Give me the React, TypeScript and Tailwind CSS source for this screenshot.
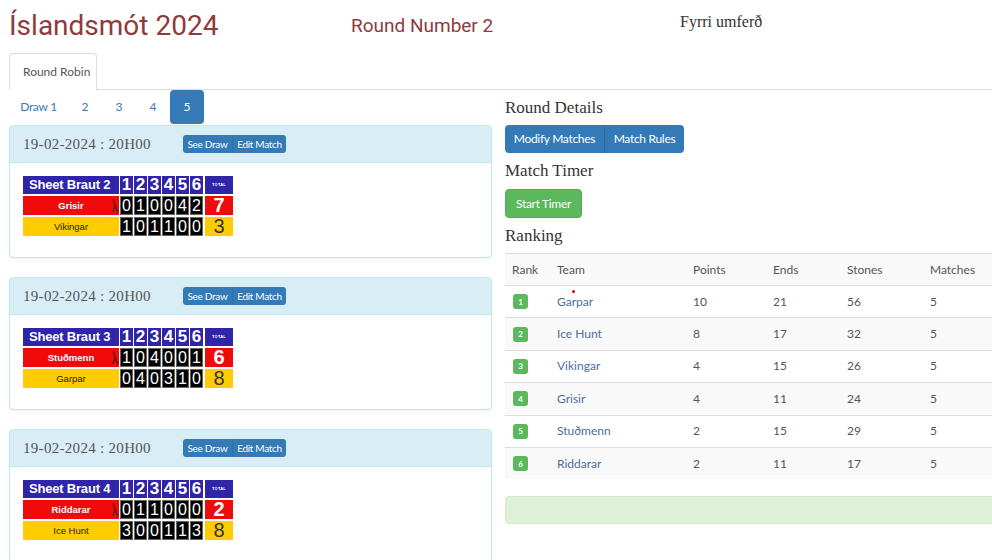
import React from "react";

type Match = {
  sheet: string;
  red: string;
  yellow: string;
  redScores: number[];
  yellowScores: number[];
  redTotal: number;
  yellowTotal: number;
};

const matches: Match[] = [
  { sheet: "Sheet Braut 2", red: "Grisir", yellow: "Vikingar", redScores: [0, 1, 0, 0, 4, 2], yellowScores: [1, 0, 1, 1, 0, 0], redTotal: 7, yellowTotal: 3 },
  { sheet: "Sheet Braut 3", red: "Stuðmenn", yellow: "Garpar", redScores: [1, 0, 4, 0, 0, 1], yellowScores: [0, 4, 0, 3, 1, 0], redTotal: 6, yellowTotal: 8 },
  { sheet: "Sheet Braut 4", red: "Riddarar", yellow: "Ice Hunt", redScores: [0, 1, 1, 0, 0, 0], yellowScores: [3, 0, 0, 1, 1, 3], redTotal: 2, yellowTotal: 8 },
];

const ranking = [
  { rank: 1, team: "Garpar", points: 10, ends: 21, stones: 56, matches: 5 },
  { rank: 2, team: "Ice Hunt", points: 8, ends: 17, stones: 32, matches: 5 },
  { rank: 3, team: "Vikingar", points: 4, ends: 15, stones: 26, matches: 5 },
  { rank: 4, team: "Grisir", points: 4, ends: 11, stones: 24, matches: 5 },
  { rank: 5, team: "Stuðmenn", points: 2, ends: 15, stones: 29, matches: 5 },
  { rank: 6, team: "Riddarar", points: 2, ends: 11, stones: 17, matches: 5 },
];

function Scoreboard({ m }: { m: Match }) {
  return (
    <div className="flex flex-col gap-[2px] font-['Liberation_Sans',Arial,sans-serif]">
      <div className="flex h-[18px]">
        <div className="w-[96px] bg-[#3024a8] text-white font-bold text-[13px] leading-[18px] pl-[6px] tracking-[-0.2px]">
          {m.sheet}
        </div>
        <div className="flex gap-px ml-px">
          {[1, 2, 3, 4, 5, 6].map((n) => (
            <div key={n} className="w-[13px] bg-[#3024a8] text-white font-bold text-[17px] leading-[18px] text-center">
              {n}
            </div>
          ))}
        </div>
        <div className="w-[28px] ml-[2px] bg-[#3024a8] text-white font-bold text-[4px] leading-[18px] text-center tracking-[0.2px]">
          TOTAL
        </div>
      </div>
      <div className="flex h-[19px]">
        <div className="relative w-[96px] bg-[#f00a0a] text-white font-bold text-[9.5px] leading-[19px] text-center">
          {m.red}
          <svg className="absolute right-[1px] top-[2px]" width="6" height="15" viewBox="0 0 6 15">
            <path d="M1 1 L5.5 14 M3.2 7.5 L0.8 14" stroke="#7a0000" strokeWidth="1.6" fill="none" />
          </svg>
        </div>
        <div className="flex gap-px ml-px">
          {m.redScores.map((s, i) => (
            <div key={i} className="w-[13px] bg-black border border-[#666] text-white text-[16px] leading-[17px] text-center">
              {s}
            </div>
          ))}
        </div>
        <div className="w-[28px] ml-[2px] bg-[#f00a0a] text-white font-bold text-[20px] leading-[19px] text-center">
          {m.redTotal}
        </div>
      </div>
      <div className="flex h-[19px]">
        <div className="w-[96px] bg-[#ffcc00] text-[#222] text-[9.5px] leading-[19px] text-center">
          {m.yellow}
        </div>
        <div className="flex gap-px ml-px">
          {m.yellowScores.map((s, i) => (
            <div key={i} className="w-[13px] bg-black border border-[#666] text-white text-[16px] leading-[17px] text-center">
              {s}
            </div>
          ))}
        </div>
        <div className="w-[28px] ml-[2px] bg-[#ffcc00] text-[#333] text-[20px] leading-[19px] text-center">
          {m.yellowTotal}
        </div>
      </div>
    </div>
  );
}

function MatchCard({ m }: { m: Match }) {
  return (
    <div className="border border-[#bce8f1] rounded-[4px] shadow-[0_1px_2px_rgba(0,0,0,0.06)] mb-[19px] bg-white">
      <div className="h-[37px] bg-[#d9edf7] border-b border-[#bce8f1] rounded-t-[3px] flex items-center pl-[13px]">
        <div className="w-[160px] font-['Liberation_Serif',Georgia,serif] text-[15px] text-[#555] oldstyle-nums tracking-[0.3px]">
          19-02-2024 : 20H00
        </div>
        <div className="flex h-[18px] rounded-[3px] bg-[#337ab7] text-white text-[10px] leading-[18px] tracking-[-0.3px]">
          <span className="w-[49px] text-center">See Draw</span>
          <span className="w-[54px] text-center border-l border-[#2e6da4]">Edit Match</span>
        </div>
      </div>
      <div className="pt-[13px] pb-[21px] pl-[13px]">
        <Scoreboard m={m} />
      </div>
    </div>
  );
}

export default function App() {
  return (
    <div className="w-[992px] h-[560px] overflow-hidden bg-white font-['Lato',sans-serif] text-[#555]">
      {/* Header */}
      <div className="flex h-[53px]">
        <div className="w-[351px] pl-[9px] pt-[8px] font-['Roboto',sans-serif] text-[28px] leading-[36px] text-[#8f3a3d]">
          Íslandsmót 2024
        </div>
        <div className="w-[329px] pt-[12px] font-['Roboto',sans-serif] text-[19px] leading-[28px] text-[#8f3a3d]">
          Round Number 2
        </div>
        <div className="pt-[11px] font-['Liberation_Serif',Georgia,serif] text-[16px] leading-[22px] text-[#333]">
          Fyrri umferð
        </div>
      </div>

      {/* Tabs */}
      <div className="ml-[9px] h-[37px] border-b border-[#ddd] flex">
        <div className="w-[88px] h-[37px] border border-[#ddd] border-b-white rounded-t-[4px] bg-white text-[12px] text-[#555] flex items-center pl-[13px]">
          Round Robin
        </div>
      </div>

      <div className="flex">
        {/* Left column */}
        <div className="ml-[9px] w-[483px] shrink-0">
          <div className="flex h-[34px] mb-px text-[12px] text-[#3f7ab0]">
            <div className="w-[59px] flex items-center justify-center tracking-[-0.3px]">Draw 1</div>
            <div className="w-[34px] flex items-center justify-center">2</div>
            <div className="w-[34px] flex items-center justify-center">3</div>
            <div className="w-[34px] flex items-center justify-center">4</div>
            <div className="w-[34px] flex items-center justify-center bg-[#337ab7] text-white rounded-[4px]">5</div>
          </div>
          {matches.map((m, i) => (
            <MatchCard key={i} m={m} />
          ))}
        </div>

        {/* Right column */}
        <div className="ml-[13px] flex-1 min-w-0">
          <div className="mt-[8px] font-['Liberation_Serif',Georgia,serif] text-[17px] leading-[20px] text-[#333]">
            Round Details
          </div>
          <div className="mt-[7px] flex h-[28px] w-fit rounded-[4px] bg-[#337ab7] text-white text-[12px] tracking-[-0.3px]">
            <span className="w-[99px] flex items-center justify-center">Modify Matches</span>
            <span className="w-[80px] flex items-center justify-center border-l border-[#2e6da4]">Match Rules</span>
          </div>
          <div className="mt-[8px] font-['Liberation_Serif',Georgia,serif] text-[17px] leading-[20px] text-[#333]">
            Match Timer
          </div>
          <div className="mt-[8px] flex items-center justify-center h-[29px] w-[77px] rounded-[4px] bg-[#5cb85c] border border-[#4cae4c] text-white text-[12px] tracking-[-0.3px]">
            Start Timer
          </div>
          <div className="mt-[8px] font-['Liberation_Serif',Georgia,serif] text-[17px] leading-[20px] text-[#333]">
            Ranking
          </div>
          <div className="mt-[7px] w-[560px] text-[12px] text-[#555]">
            <div className="grid grid-cols-[45px_136px_80px_74px_83px_135px] h-[32px] items-center border-t border-[#ddd] bg-[#f9f9f9] pl-[7px]">
              <span>Rank</span>
              <span>Team</span>
              <span>Points</span>
              <span>Ends</span>
              <span>Stones</span>
              <span>Matches</span>
            </div>
            {ranking.map((r, i) => (
              <div
                key={r.rank}
                className={
                  "grid grid-cols-[45px_136px_80px_74px_83px_135px] h-[32.4px] items-center border-t border-[#ddd] pl-[7px] " +
                  (i % 2 === 1 ? "bg-[#f9f9f9]" : "bg-white")
                }
              >
                <span className="flex">
                  <span className="flex items-center justify-center w-[15px] h-[15px] rounded-[3px] bg-[#5cb85c] text-white text-[8px] font-bold ml-px">
                    {r.rank}
                  </span>
                </span>
                <span className="relative text-[#4b6e9c]">
                  {r.team}
                  {r.rank === 1 && (
                    <span className="absolute left-[15px] top-[-3px] w-[3px] h-[3px] rounded-full bg-[#e00000]" />
                  )}
                </span>
                <span>{r.points}</span>
                <span>{r.ends}</span>
                <span>{r.stones}</span>
                <span>{r.matches}</span>
              </div>
            ))}
          </div>
          <div className="mt-[17px] h-[28px] w-[560px] rounded-[4px] bg-[#dff0d8] border border-[#d6e9c6]" />
        </div>
      </div>
    </div>
  );
}
